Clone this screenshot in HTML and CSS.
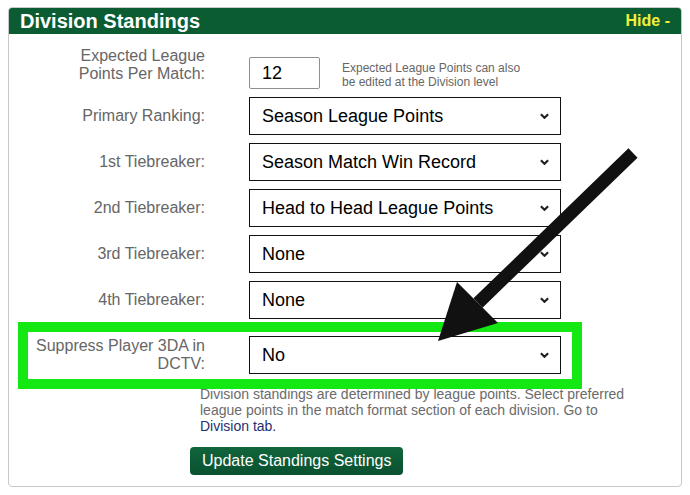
FILE: index.html
```html
<!DOCTYPE html>
<html lang="en">
<head>
  <meta charset="UTF-8">
  <title>Division Standings</title>
  <link rel="stylesheet" href="styles.css">
</head>
<body>
  <div class="panel">
    <div class="panel-head">
      <span class="title">Division Standings</span>
      <a class="toggle" href="#">Hide -</a>
    </div>

    <div class="panel-body">
      <div class="row top">
        <label class="label">Expected League<br>Points Per Match:</label>
        <div class="field-inline">
          <input class="num" type="text" value="12">
          <span class="note">Expected League Points can also<br>be edited at the Division level</span>
        </div>
      </div>

      <div class="row">
        <label class="label">Primary Ranking:</label>
        <div class="select"><span>Season League Points</span><svg class="chev" viewBox="0 0 10 6"><polyline points="1,1 5,5 9,1"/></svg></div>
      </div>
      <div class="row">
        <label class="label">1st Tiebreaker:</label>
        <div class="select"><span>Season Match Win Record</span><svg class="chev" viewBox="0 0 10 6"><polyline points="1,1 5,5 9,1"/></svg></div>
      </div>
      <div class="row">
        <label class="label">2nd Tiebreaker:</label>
        <div class="select"><span>Head to Head League Points</span><svg class="chev" viewBox="0 0 10 6"><polyline points="1,1 5,5 9,1"/></svg></div>
      </div>
      <div class="row">
        <label class="label">3rd Tiebreaker:</label>
        <div class="select"><span>None</span><svg class="chev" viewBox="0 0 10 6"><polyline points="1,1 5,5 9,1"/></svg></div>
      </div>
      <div class="row">
        <label class="label">4th Tiebreaker:</label>
        <div class="select"><span>None</span><svg class="chev" viewBox="0 0 10 6"><polyline points="1,1 5,5 9,1"/></svg></div>
      </div>

      <div class="highlight">
        <div class="row flagged">
          <label class="label">Suppress Player 3DA in<br>DCTV:</label>
          <div class="select"><span>No</span><svg class="chev" viewBox="0 0 10 6"><polyline points="1,1 5,5 9,1"/></svg></div>
        </div>
      </div>

      <p class="help">Division standings are determined by league points. Select preferred league points in the match format section of each division. Go to <a href="#">Division tab.</a></p>

      <button class="btn" type="button">Update Standings Settings</button>
    </div>

    <!-- annotation arrow -->
    <svg class="arrow" width="690" height="495" viewBox="0 0 690 495">
      <line x1="633" y1="153" x2="478" y2="303" stroke="#111" stroke-width="13"/>
      <polygon points="457,282 498,323 438,341" fill="#111"/>
    </svg>
  </div>
</body>
</html>
```

FILE: styles.css
```css
body {
  margin: 0;
  background: #fff;
  font-family: "Liberation Sans", Arial, sans-serif;
}

.panel {
  margin: 7px 8px 0;
  width: 672px;
  border: 1px solid #c9c9c9;
  border-radius: 4px;
  padding-bottom: 11px;
}

.panel-head {
  background: #0b5c32;
  height: 26px;
  display: flex;
  align-items: center;
  justify-content: space-between;
  padding: 0 11px;
  border-radius: 3px 3px 0 0;
}

.title {
  color: #fff;
  font-weight: bold;
  font-size: 20px;
}

.toggle {
  color: #f4f03a;
  font-weight: bold;
  font-size: 16px;
  text-decoration: none;
}

.panel-body {
  padding-top: 13px;
  display: flex;
  flex-direction: column;
  gap: 8px;
}

.row {
  display: grid;
  grid-template-columns: 196px 312px;
  column-gap: 44px;
  align-items: center;
}

.label {
  text-align: right;
  color: #666;
  font-size: 16px;
  line-height: 18px;
}

.row.top {
  align-items: start;
}

.field-inline {
  display: flex;
  align-items: center;
  gap: 22px;
  margin-top: 10px;
  white-space: nowrap;
}

.num {
  width: 71px;
  height: 32px;
  box-sizing: border-box;
  border: 1px solid #8f8f8f;
  border-radius: 2px;
  padding: 0 12px;
  font: 18px "Liberation Sans", Arial, sans-serif;
  color: #000;
}

.note {
  font-size: 12px;
  line-height: 14px;
  color: #666;
  margin-top: 3px;
}

.select {
  height: 38px;
  box-sizing: border-box;
  border: 1px solid #111;
  display: flex;
  align-items: center;
  justify-content: space-between;
  padding: 0 11px 0 12px;
  font-size: 18px;
  color: #000;
  background: #fff;
}

.chev {
  width: 9px;
  height: 6px;
  fill: none;
  stroke: #222;
  stroke-width: 2.4;
}

.highlight {
  margin: -5px 0 0 9px;
  width: 544px;
  border: 10px solid #13e813;
  padding: 4px 0 5px;
  background: #fff;
  position: relative;
  z-index: 1;
}

.row.flagged {
  grid-template-columns: 177px 312px;
}

.help {
  margin: -11px 0 0 191px;
  width: 440px;
  font-size: 14px;
  line-height: 16px;
  color: #6b6b6b;
}

.help a {
  color: #1f2f6f;
  text-decoration: none;
}

.btn {
  align-self: flex-start;
  margin: 5px 0 0 181px;
  height: 28px;
  padding: 0 12px;
  border: none;
  border-radius: 4px;
  background: linear-gradient(#11653c, #0a5130);
  color: #fff;
  font: 16px "Liberation Sans", Arial, sans-serif;
}

.arrow {
  position: absolute;
  left: 0;
  top: 0;
  z-index: 2;
  pointer-events: none;
}
```
